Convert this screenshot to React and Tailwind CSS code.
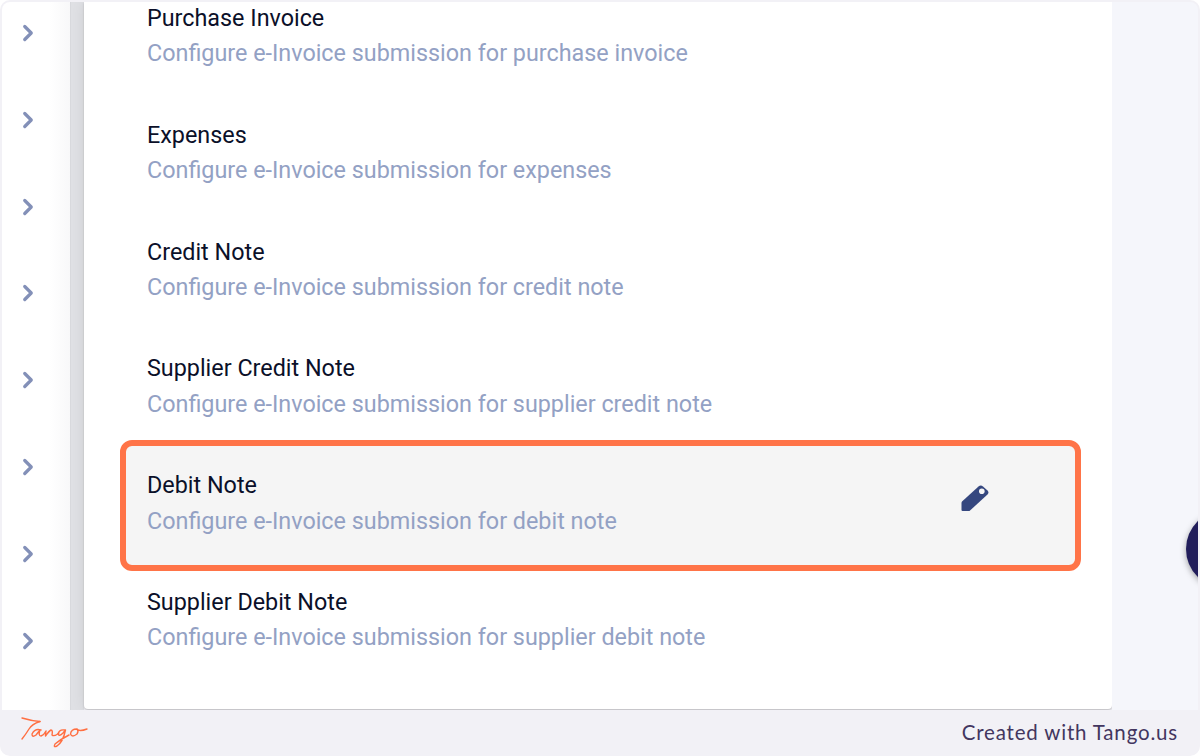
import React from "react";
import { ChevronRight } from "lucide-react";

const rows = [
  { title: "Purchase Invoice", desc: "Configure e-Invoice submission for purchase invoice" },
  { title: "Expenses", desc: "Configure e-Invoice submission for expenses" },
  { title: "Credit Note", desc: "Configure e-Invoice submission for credit note" },
  { title: "Supplier Credit Note", desc: "Configure e-Invoice submission for supplier credit note" },
  { title: "Debit Note", desc: "Configure e-Invoice submission for debit note", active: true },
  { title: "Supplier Debit Note", desc: "Configure e-Invoice submission for supplier debit note" },
];

const PencilIcon = () => (
  <svg width="28" height="27" viewBox="0 0 28 27" className="absolute left-[877px] top-[16px]">
    <path
      d="M1 16.5 L17.5 1.5 Q19.8 -0.3 22 1.5 L26.5 5.5 Q28.3 7.5 26.5 9.5 L8.5 26 H1.5 Q0.5 26 0.5 25 V18 Q0.5 17 1 16.5 Z"
      fill="#35477f"
    />
    <circle cx="20.8" cy="6.2" r="2.8" fill="#f5f5f5" />
  </svg>
);

const TangoLogo = () => (
  <svg width="68" height="32" viewBox="0 0 68 32" fill="none" stroke="#ff6f42" strokeWidth="1.4" strokeLinecap="round" strokeLinejoin="round">
    <path d="M2 2 Q12 5 20 5.5" />
    <path d="M20 5.5 Q12 8 9 13 Q6 18 2 23" />
    <path d="M21 14 Q15 12 12 18 Q12 22 16 19 L20 14 Q18 20 21 20 Q24 19 26 15 Q25.5 18 25.5 20 Q29 15 31 14 Q33 14 32 19 Q34 21 39 17" />
    <path d="M45 14 Q39 13 38 18 Q39 21 43 17 L45.5 14 Q43 26 37 30 Q33 32 35 28 Q41 23 49 19" />
    <path d="M57 13 Q51 13 50.5 18 Q52 22 57 18 Q59 15 57 13 Q59 16 67 13" />
  </svg>
);

export default function App() {
  return (
    <div className="h-[756px] w-[1200px] overflow-hidden bg-white">
      <div className="flex h-full flex-col overflow-hidden rounded-[10px] bg-[#f2f1f6] px-[2px] pt-[2px]">
        <div className="relative flex h-[708px] overflow-hidden rounded-t-[8px]">
          <aside className="flex w-[68px] shrink-0 flex-col items-start bg-gradient-to-r from-white from-70% to-[#f8f8f9] pl-[13px] pt-[18px]">
            {[0, 1, 2, 3, 4, 5, 6, 7].map((i) => (
              <div key={i} className="flex h-[86.8px] shrink-0 items-start">
                <ChevronRight size={26} strokeWidth={3} className="text-[#8390b8]" />
              </div>
            ))}
          </aside>
          <div className="w-[14px] shrink-0 border-l border-[#d8d9dd] bg-[#dfe0e4]" />
          <main className="h-[707px] w-[1028px] shrink-0 rounded-b-[4px] bg-white shadow-[0_1px_2px_rgba(0,0,0,0.2),0_0_14px_rgba(0,0,0,0.08)]">
            {rows.map((row) => (
              <div key={row.title} className="relative h-[116.8px] font-['Roboto',sans-serif]">
                {row.active && (
                  <div className="absolute left-[36px] top-[-29px] h-[131px] w-[961px] rounded-[12px] border-[6px] border-[#ff7448] bg-[#f5f5f5]" />
                )}
                <div className="relative pl-[63px] pt-[1px]">
                  <div className="text-[23.35px] leading-[30px] text-[#0b1029]">{row.title}</div>
                  <div className="mt-[5.4px] text-[23.35px] leading-[30px] text-[#93a1c4]">{row.desc}</div>
                </div>
                {row.active && <PencilIcon />}
              </div>
            ))}
          </main>
          <div className="flex-1 bg-[#f5f6fb]" />
          <div className="absolute left-[1184px] top-[508px] h-[78px] w-[78px] rounded-full bg-[#211d5b] shadow-[0_2px_6px_rgba(0,0,0,0.35)]" />
        </div>
        <footer className="flex flex-1 items-center justify-between pb-[2px] pl-[18px] pr-[20px]">
          <TangoLogo />
          <span className="font-['Lato',sans-serif] text-[20.5px] tracking-[0.82px] text-[#43365f]">Created with Tango.us</span>
        </footer>
      </div>
    </div>
  );
}
